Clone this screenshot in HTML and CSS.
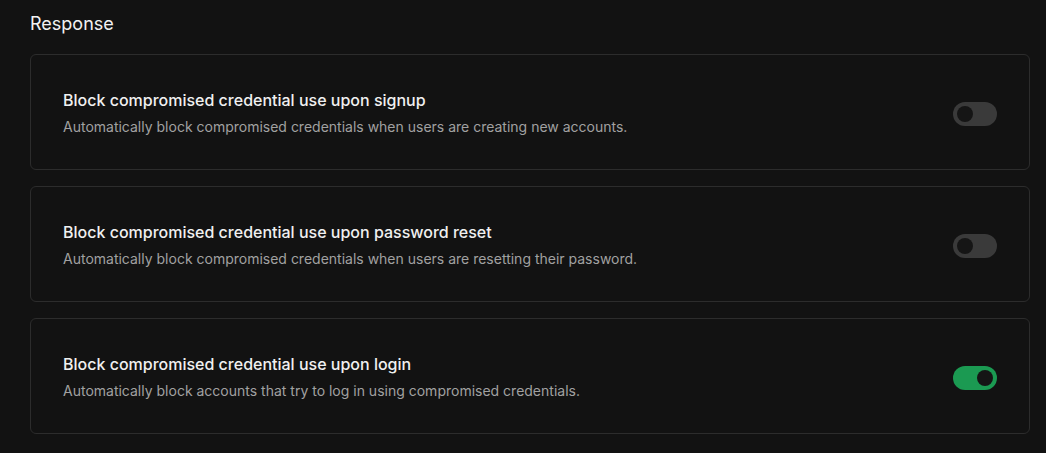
FILE: index.html
```html
<!DOCTYPE html>
<html lang="en">
<head>
  <meta charset="UTF-8">
  <meta name="viewport" content="width=device-width, initial-scale=1.0">
  <title>Response settings</title>
  <link rel="stylesheet" href="styles.css">
</head>
<body>

<main class="secao">
  <h2>Response</h2>

  <!-- Signup -->
  <div class="cartao">
    <div class="texto">
      <h3>Block compromised credential use upon signup</h3>
      <p>Automatically block compromised credentials when users are creating new accounts.</p>
    </div>
    <span class="chave"></span>
  </div>

  <!-- Password reset -->
  <div class="cartao">
    <div class="texto">
      <h3>Block compromised credential use upon password reset</h3>
      <p>Automatically block compromised credentials when users are resetting their password.</p>
    </div>
    <span class="chave"></span>
  </div>

  <!-- Login -->
  <div class="cartao">
    <div class="texto">
      <h3>Block compromised credential use upon login</h3>
      <p>Automatically block accounts that try to log in using compromised credentials.</p>
    </div>
    <span class="chave ligada"></span>
  </div>
</main>

</body>
</html>
```

FILE: styles.css
```css
* {
  margin: 0;
  padding: 0;
  box-sizing: border-box;
}
body {
  font-family: Inter, "Noto Sans", sans-serif;
  background-color: #121212;
  color: #ededed;
}
.secao {
  padding: 12px 16px 0 30px;
  display: flex;
  flex-direction: column;
  gap: 16px;
}
.secao h2 {
  font-size: 18px;
  font-weight: 400;
  line-height: 24px;
  color: #f2f2f2;
  margin-bottom: 2px;
}
.cartao {
  display: flex;
  align-items: center;
  justify-content: space-between;
  height: 116px;
  padding: 4px 32px 0;
  border: 1px solid #2c2c2c;
  border-radius: 6px;
}
.texto {
  margin-top: -3px;
}
.texto h3 {
  font-size: 16px;
  font-weight: 500;
  line-height: 22px;
  color: #f0f0f0;
  margin-bottom: 6px;
}
.texto p {
  font-size: 14px;
  line-height: 20px;
  color: #a1a1a1;
}
.chave {
  position: relative;
  width: 44px;
  height: 24px;
  border-radius: 12px;
  background-color: #3a3a3a;
  flex-shrink: 0;
}
.chave::after {
  content: "";
  position: absolute;
  top: 4px;
  left: 4px;
  width: 16px;
  height: 16px;
  border-radius: 50%;
  background-color: #151515;
}
.chave.ligada {
  background-color: #1b9a52;
}
.chave.ligada::after {
  left: 24px;
}
```
